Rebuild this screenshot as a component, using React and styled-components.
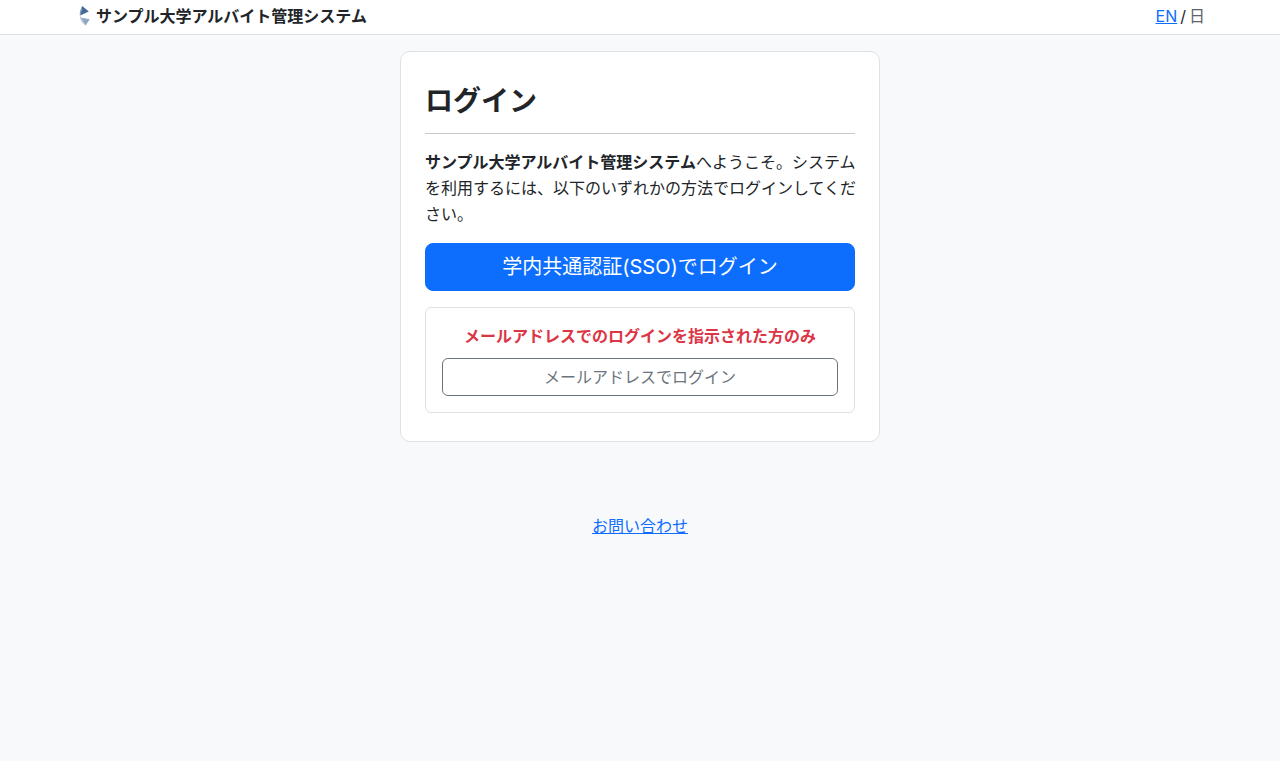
import React from 'react'
import styled, { createGlobalStyle } from 'styled-components';

const GlobalStyle = createGlobalStyle`
*{
box-sizing:border-box;
}
body{
margin:0;
background:#f8f9fa;
color:#212529;
font-family:Inter, "Noto Sans CJK JP", sans-serif;
font-size:16px;
line-height:26px;
}
`
const Header = styled.header`
background:#fff;
border-bottom:1px solid #dee2e6;
`
const Nav = styled.nav`
display:flex;
justify-content:space-between;
align-items:center;
max-width:1140px;
height:34px;
margin:0 auto;
padding:0 5px 2px 6px;
`
const Brand = styled.a`
display:flex;
align-items:center;
gap:4px;
color:inherit;
font-weight:700;
text-decoration:none;
`
const Languages = styled.div`
display:flex;
gap:3px;
`
const TextLink = styled.a`
color:#0d6efd;
text-decoration:underline;
`
const Current = styled.span`
color:#5c636a;
`
const Card = styled.main`
max-width:480px;
margin:16px auto 0;
padding:24px 24px 28px;
background:#fff;
border:1px solid #dee2e6;
border-radius:10px;
`
const Title = styled.h1`
margin:0;
padding-bottom:7px;
font-size:28px;
font-weight:700;
line-height:50px;
`
const Divider = styled.hr`
margin:0 0 15px;
border:0;
border-top:1px solid #c8c9ca;
`
const Intro = styled.p`
margin:0 0 16px;
white-space:nowrap;
`
const Button = styled.button`
display:block;
width:100%;
padding:${(props) => props.$primary ? "8px 16px" : "5px 12px"};
border:1px solid ${(props) => props.$primary ? "#0d6efd" : "#6c757d"};
border-radius:${(props) => props.$primary ? "8px" : "6px"};
background:${(props) => props.$primary ? "#0d6efd" : "#fff"};
color:${(props) => props.$primary ? "#fff" : "#6c757d"};
font-family:inherit;
font-size:${(props) => props.$primary ? "20px" : "16px"};
line-height:${(props) => props.$primary ? "30px" : "26px"};
cursor:pointer;
`
const MailBox = styled.section`
margin-top:16px;
padding:16px;
border:1px solid #dee2e6;
border-radius:6px;
`
const Notice = styled.p`
margin:0;
padding-bottom:10px;
color:#dc3545;
font-weight:700;
line-height:24px;
text-align:center;
`
const Footer = styled.footer`
padding:71px 0 24px;
text-align:center;
`

const Logo = () => (
  <svg width="16" height="22" viewBox="0 0 16 22" aria-hidden="true">
    <path d="M6.2 1 12.8 6.6 4.2 10.4Z" fill="#456a96" />
    <path d="M6.2 1Q3.4 5.2 3.8 10.6L4.8 10Z" fill="#7f9aba" />
    <path d="M4.2 12.6 13.8 14.2 9.6 20.6Z" fill="#92a7c1" />
    <path d="M3.8 10.6Q3.8 16.8 9.6 20.6L5.4 12.8Z" fill="#b4c4d6" />
  </svg>
)

const App = () => {
  return (
    <>
      <GlobalStyle />
      <Header>
        <Nav>
          <Brand href="#"><Logo />サンプル大学アルバイト管理システム</Brand>
          <Languages>
            <TextLink href="#en">EN</TextLink>
            <span>/</span>
            <Current>日</Current>
          </Languages>
        </Nav>
      </Header>
      <Card>
        <Title>ログイン</Title>
        <Divider />
        <Intro>
          <strong>サンプル大学アルバイト管理システム</strong>へようこそ。システム<br />
          を利用するには、以下のいずれかの方法でログインしてくだ<br />
          さい。
        </Intro>
        <Button type="button" $primary>学内共通認証(SSO)でログイン</Button>
        <MailBox>
          <Notice>メールアドレスでのログインを指示された方のみ</Notice>
          <Button type="button">メールアドレスでログイン</Button>
        </MailBox>
      </Card>
      <Footer>
        <TextLink href="#contact">お問い合わせ</TextLink>
      </Footer>
    </>
  )
}

export default App;
